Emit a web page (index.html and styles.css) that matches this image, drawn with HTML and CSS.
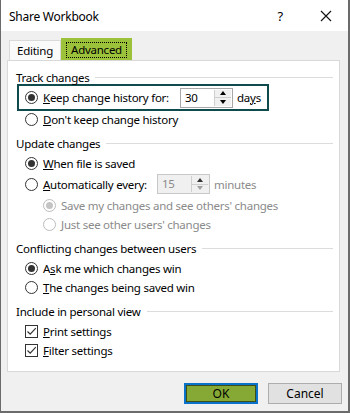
FILE: index.html
```html
<!DOCTYPE html>
<html lang="en">

<head>
	<meta charset="UTF-8">
	<meta name="viewport" content="width=device-width, initial-scale=1.0">
	<title>Share Workbook</title>
	<link rel="stylesheet" href="styles.css">
</head>

<body>
	<div class="dialog">
		<header class="titlebar">
			<span class="title">Share Workbook</span>
			<span class="help">?</span>
			<span class="close">
				<svg width="12" height="12" viewBox="0 0 12 12"><path d="M1 1L11 11M11 1L1 11" stroke="#111" stroke-width="1.1" fill="none"/></svg>
			</span>
		</header>

		<div class="tabs">
			<div class="tab">Editing</div>
			<div class="tab active"><span class="focus">Advanced</span></div>
		</div>

		<div class="panel">
			<div class="group-title first">Track changes</div>
			<div class="option highlight">
				<span class="radio checked"></span>
				<span class="label keep-label"><u>K</u>eep change history for:</span>
				<span class="spin">
					<span class="spin-value">30</span>
					<span class="spin-btns"><span class="up"></span><span class="down"></span></span>
				</span>
				<span class="unit">da<u>y</u>s</span>
			</div>
			<div class="option after-box">
				<span class="radio"></span>
				<span class="label"><u>D</u>on't keep change history</span>
			</div>

			<div class="group-title">Update changes</div>
			<div class="option">
				<span class="radio checked"></span>
				<span class="label"><u>W</u>hen file is saved</span>
			</div>
			<div class="option auto">
				<span class="radio"></span>
				<span class="label auto-label"><u>A</u>utomatically every:</span>
				<span class="spin disabled">
					<span class="spin-value">15</span>
					<span class="spin-btns"><span class="up"></span><span class="down"></span></span>
				</span>
				<span class="unit muted">minutes</span>
			</div>
			<div class="option sub first-sub disabled">
				<span class="radio checked"></span>
				<span class="label">Save my changes and see others' changes</span>
			</div>
			<div class="option sub disabled">
				<span class="radio"></span>
				<span class="label">Just see other users' changes</span>
			</div>

			<div class="group-title">Conflicting changes between users</div>
			<div class="option">
				<span class="radio checked"></span>
				<span class="label">A<u>s</u>k me which changes win</span>
			</div>
			<div class="option">
				<span class="radio"></span>
				<span class="label"><u>T</u>he changes being saved win</span>
			</div>

			<div class="group-title">Include in personal view</div>
			<div class="option">
				<span class="checkbox">
					<svg width="11" height="11" viewBox="0 0 11 11"><path d="M1.5 5.5L4.2 8.2L9.8 2.2" stroke="#333" stroke-width="1.2" fill="none"/></svg>
				</span>
				<span class="label"><u>P</u>rint settings</span>
			</div>
			<div class="option">
				<span class="checkbox">
					<svg width="11" height="11" viewBox="0 0 11 11"><path d="M1.5 5.5L4.2 8.2L9.8 2.2" stroke="#333" stroke-width="1.2" fill="none"/></svg>
				</span>
				<span class="label"><u>F</u>ilter settings</span>
			</div>
		</div>

		<footer class="buttons">
			<button class="btn primary">OK</button>
			<button class="btn">Cancel</button>
		</footer>
	</div>
</body>

</html>
```

FILE: styles.css
```css
body {
	margin: 0;
	font-family: 'Noto Sans', 'Segoe UI', sans-serif;
	font-size: 11.5px;
	letter-spacing: -0.25px;
	color: #000;
	background: #fff;
}

.dialog {
	width: 350px;
	height: 413px;
	box-sizing: border-box;
	background: #f0f0f0;
	border-left: 1px solid #6b6b6b;
	border-right: 2px solid #6b6b6b;
	border-bottom: 2px solid #6b6b6b;
	display: flex;
	flex-direction: column;
}

.titlebar {
	height: 31px;
	background: #fff;
	display: flex;
	align-items: center;
	padding: 1px 0 0 8px;
	box-sizing: border-box;
	flex-shrink: 0;
}

.title {
	flex: 1;
	font-size: 12px;
}

.help {
	font-size: 13px;
	margin-right: 37px;
}

.close {
	display: flex;
	margin-right: 16px;
}

.tabs {
	display: flex;
	align-items: flex-end;
	height: 22px;
	margin-top: 7px;
	padding-left: 8px;
}

.tab {
	width: 52px;
	height: 20px;
	box-sizing: border-box;
	display: flex;
	align-items: center;
	justify-content: center;
	background: #fafafa;
	border: 1px solid #d9d9d9;
	border-bottom: none;
}

.tab.active {
	width: 71px;
	height: 22px;
	background: #9cc23b;
	border-color: #9cc23b;
}

.focus {
	outline: 1px dotted #000;
	width: 59px;
	text-align: center;
	line-height: 14px;
}

.panel {
	height: 312px;
	box-sizing: border-box;
	margin: 0 8px 0 6px;
	background: #fff;
	border: 1px solid #d9d9d9;
	padding: 0 6px 0 8px;
}

.group-title {
	display: flex;
	align-items: center;
	height: 16px;
	margin-top: 6px;
}

.group-title.first {
	margin-top: 8px;
}

.group-title::after {
	content: "";
	flex: 1;
	border-top: 1px solid #dcdcdc;
	margin-left: 6px;
}

.option {
	display: flex;
	align-items: center;
	height: 19px;
	padding-left: 9px;
}

.group-title + .option {
	margin-top: 3px;
}

.option.auto {
	height: 20px;
	margin-top: 1px;
}

.option.sub {
	padding-left: 27px;
}

.option.first-sub {
	margin-top: 2px;
}

.option.disabled {
	color: #8a8a8a;
}

.group-title + .option.highlight {
	height: 27px;
	box-sizing: border-box;
	width: 252px;
	border: 2px solid #0f4b4d;
	margin: -1px 0 0 1px;
	padding-left: 6px;
}

.after-box {
	margin-top: -1px;
}

.radio {
	width: 13px;
	height: 13px;
	box-sizing: border-box;
	border: 1px solid #333;
	border-radius: 50%;
	background: #fff;
	display: flex;
	align-items: center;
	justify-content: center;
	margin-right: 5px;
	flex-shrink: 0;
}

.radio.checked::after {
	content: "";
	width: 7px;
	height: 7px;
	border-radius: 50%;
	background: #333;
}

.option.disabled .radio {
	border-color: #bcbcbc;
}

.option.disabled .radio.checked::after {
	background: #c4c4c4;
}

.checkbox {
	width: 13px;
	height: 13px;
	box-sizing: border-box;
	border: 1px solid #333;
	background: #fff;
	display: flex;
	align-items: center;
	justify-content: center;
	margin-right: 5px;
}

.keep-label {
	width: 137px;
}

.auto-label {
	width: 114px;
}

.spin {
	width: 53px;
	height: 20px;
	box-sizing: border-box;
	border: 1px solid #a8a8a8;
	background: #fff;
	display: flex;
	align-items: stretch;
}

.spin.disabled {
	background: #f0f0f0;
	border-color: #c8c8c8;
	color: #8a8a8a;
}

.spin-value {
	flex: 1;
	padding-left: 4px;
	line-height: 18px;
}

.spin-btns {
	width: 16px;
	margin: 1px;
	display: flex;
	flex-direction: column;
	border-left: 1px solid #cfcfcf;
}

.spin-btns span {
	flex: 1;
	display: flex;
	align-items: center;
	justify-content: center;
	background: #f0f0f0;
}

.spin-btns .up {
	border-bottom: 1px solid #cfcfcf;
}

.spin-btns .up::after {
	content: "";
	border: 3px solid transparent;
	border-bottom: 4px solid #000;
	border-top: none;
}

.spin-btns .down::after {
	content: "";
	border: 3px solid transparent;
	border-top: 4px solid #000;
	border-bottom: none;
}

.spin.disabled .spin-btns .up::after {
	border-bottom-color: #333;
}

.spin.disabled .spin-btns .down::after {
	border-top-color: #a0a0a0;
}

.unit {
	margin-left: 4px;
}

.muted {
	color: #8a8a8a;
}

.buttons {
	display: flex;
	justify-content: flex-end;
	gap: 10px;
	padding: 11px 6px 0 0;
}

.btn {
	width: 74px;
	height: 21px;
	font-family: inherit;
	font-size: 12px;
	background: #e1e1e1;
	border: 1px solid #adadad;
	padding: 0;
	color: #000;
}

.btn.primary {
	background: #86a935;
	border: 2px solid #0a72c8;
	box-shadow: inset 0 0 0 1px #3b4f1a;
}
```
